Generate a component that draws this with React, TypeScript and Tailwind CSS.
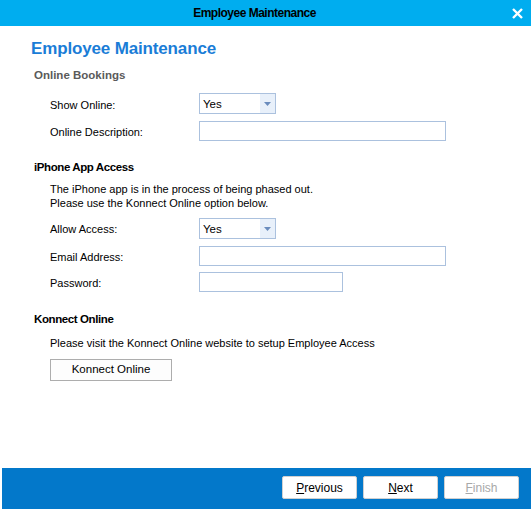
const font = { fontFamily: '"Liberation Sans", Arial, sans-serif' };

const Dropdown = ({ value }: { value: string }) => (
  <div className="flex h-[21px] w-[77px] border border-[#abc1de] bg-white">
    <div className="flex-1 pl-[3px] pt-[1px] text-[11.5px] leading-[19px] text-black">{value}</div>
    <div className="flex w-[15px] items-center justify-center bg-[#e8f0fa]">
      <svg width="7" height="4" viewBox="0 0 7 4">
        <path d="M0 0 L7 0 L3.5 4 Z" fill="#6a8cbd" />
      </svg>
    </div>
  </div>
);

const Field = ({ width }: { width: string }) => (
  <div className={`h-[20px] border border-[#abc1de] bg-white ${width}`} />
);

const Row = ({
  label,
  children,
  className = "",
  pad = "pt-[4px]",
}: {
  label: string;
  children: React.ReactNode;
  className?: string;
  pad?: string;
}) => (
  <div className={`flex items-start pl-[50px] ${className}`}>
    <div className={`w-[149px] text-[11px] leading-[14px] text-black ${pad}`}>{label}</div>
    {children}
  </div>
);

const FooterButton = ({ first, rest, disabled }: { first: string; rest: string; disabled?: boolean }) => (
  <button
    className={`h-[23px] w-[75px] rounded-[2px] border border-[#d0d0d0] bg-white text-[12px] ${
      disabled ? "text-[#a8a8a8]" : "text-black"
    }`}
  >
    <span className="underline underline-offset-1">{first}</span>
    {rest}
  </button>
);

export default function App() {
  return (
    <div className="flex h-[509px] w-[531px] flex-col bg-white" style={font}>
      {/* title bar */}
      <div className="relative flex h-[26px] items-center justify-center bg-[#00adef] pr-[22px]">
        <span className="text-[12px] font-bold tracking-[-0.5px] text-black">Employee Maintenance</span>
        <svg className="absolute right-[8px] top-[8px]" width="11" height="11" viewBox="0 0 11 11">
          <path d="M1 1 L10 10 M10 1 L1 10" stroke="#fff" strokeWidth="2.4" />
        </svg>
      </div>

      <div className="mt-[12px] pl-[31px] text-[17px] font-bold leading-[22px] tracking-[-0.15px] text-[#1a7dd7]">
        Employee Maintenance
      </div>
      <div className="mt-[8px] pl-[34px] text-[11.5px] font-bold leading-[14px] text-[#5a5a5a]">
        Online Bookings
      </div>

      <Row label="Show Online:" className="mt-[11px]" pad="pt-[5px]">
        <Dropdown value="Yes" />
      </Row>
      <Row label="Online Description:" className="mt-[7px]">
        <Field width="w-[247px]" />
      </Row>

      <div className="mt-[19px] pl-[34px] text-[11.5px] font-bold leading-[14px] tracking-[-0.4px] text-black">
        iPhone App Access
      </div>
      <div className="mt-[8px] pl-[50px] text-[11px] leading-[14px] text-black">
        <div>The iPhone app is in the process of being phased out.</div>
        <div>Please use the Konnect Online option below.</div>
      </div>

      <Row label="Allow Access:" className="mt-[8px]">
        <Dropdown value="Yes" />
      </Row>
      <Row label="Email Address:" className="mt-[7px]">
        <Field width="w-[247px]" />
      </Row>
      <Row label="Password:" className="mt-[6px]">
        <Field width="w-[144px]" />
      </Row>

      <div className="mt-[20px] pl-[34px] text-[11.5px] font-bold leading-[14px] tracking-[-0.4px] text-black">
        Konnect Online
      </div>
      <div className="mt-[10px] pl-[50px] text-[11px] leading-[14px] text-black">
        Please visit the Konnect Online website to setup Employee Access
      </div>
      <div className="mt-[9px] flex pl-[50px]">
        <button className="h-[22px] w-[122px] border border-[#adadad] bg-[#fdfdfd] text-[11.5px] text-black">
          Konnect Online
        </button>
      </div>

      {/* footer */}
      <div className="ml-[2px] mt-auto flex h-[41px] justify-end gap-[6px] bg-[#0378ca] pr-[12px] pt-[8px]">
        <FooterButton first="P" rest="revious" />
        <FooterButton first="N" rest="ext" />
        <FooterButton first="F" rest="inish" disabled />
      </div>
    </div>
  );
}
